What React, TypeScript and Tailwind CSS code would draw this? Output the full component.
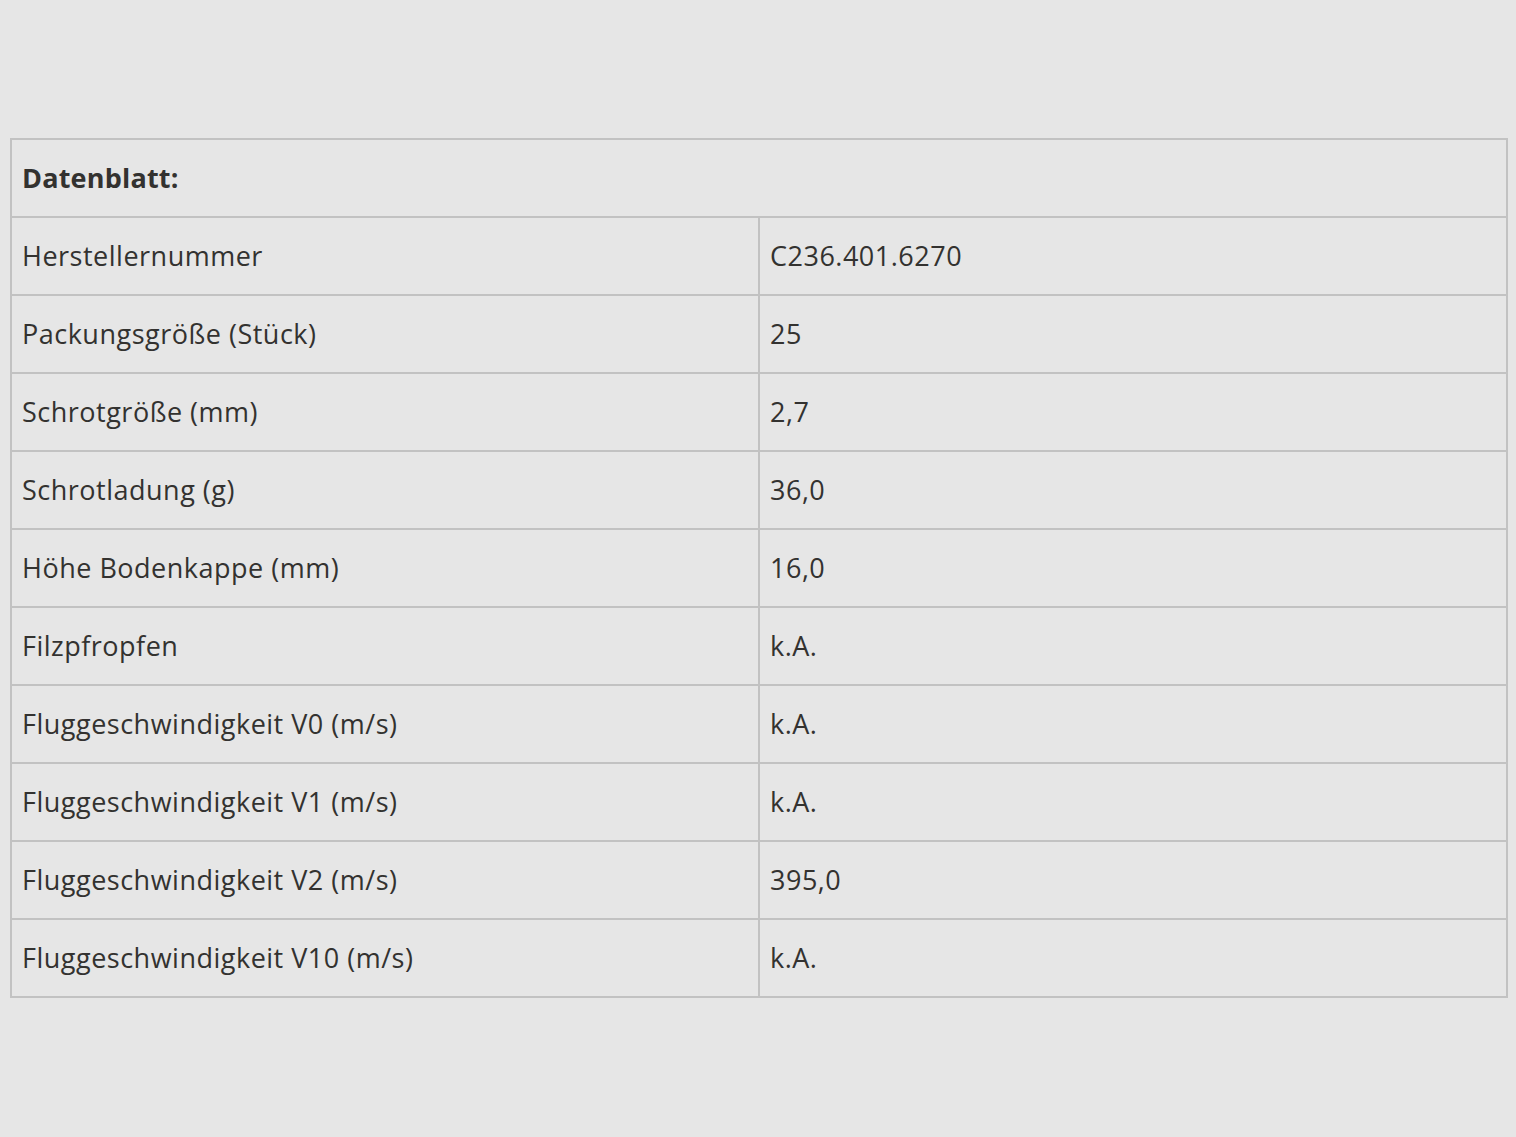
import React from "react";

const rows: [string, string][] = [
  ["Herstellernummer", "C236.401.6270"],
  ["Packungsgröße (Stück)", "25"],
  ["Schrotgröße (mm)", "2,7"],
  ["Schrotladung (g)", "36,0"],
  ["Höhe Bodenkappe (mm)", "16,0"],
  ["Filzpfropfen", "k.A."],
  ["Fluggeschwindigkeit V0 (m/s)", "k.A."],
  ["Fluggeschwindigkeit V1 (m/s)", "k.A."],
  ["Fluggeschwindigkeit V2 (m/s)", "395,0"],
  ["Fluggeschwindigkeit V10 (m/s)", "k.A."],
];

export default function App() {
  return (
    <div
      className="w-[1516px] h-[1137px] bg-[#e6e6e6] pt-[138px] pl-[10px] text-[#333230]"
      style={{ fontFamily: '"Open Sans", "Noto Sans", sans-serif' }}
    >
      <div className="w-[1498px] border-2 border-[#c2c2c2] text-[27px] tracking-[0.5px]">
        <div className="h-[76px] flex items-center px-[10px] font-bold tracking-[0.2px]">Datenblatt:</div>
        {rows.map(([k, v]) => (
          <div key={k} className="h-[78px] flex border-t-2 border-[#c2c2c2]">
            <div className="w-[746px] flex items-center px-[10px]">{k}</div>
            <div className="flex-1 flex items-center px-[10px] border-l-2 border-[#c2c2c2]">{v}</div>
          </div>
        ))}
      </div>
    </div>
  );
}
